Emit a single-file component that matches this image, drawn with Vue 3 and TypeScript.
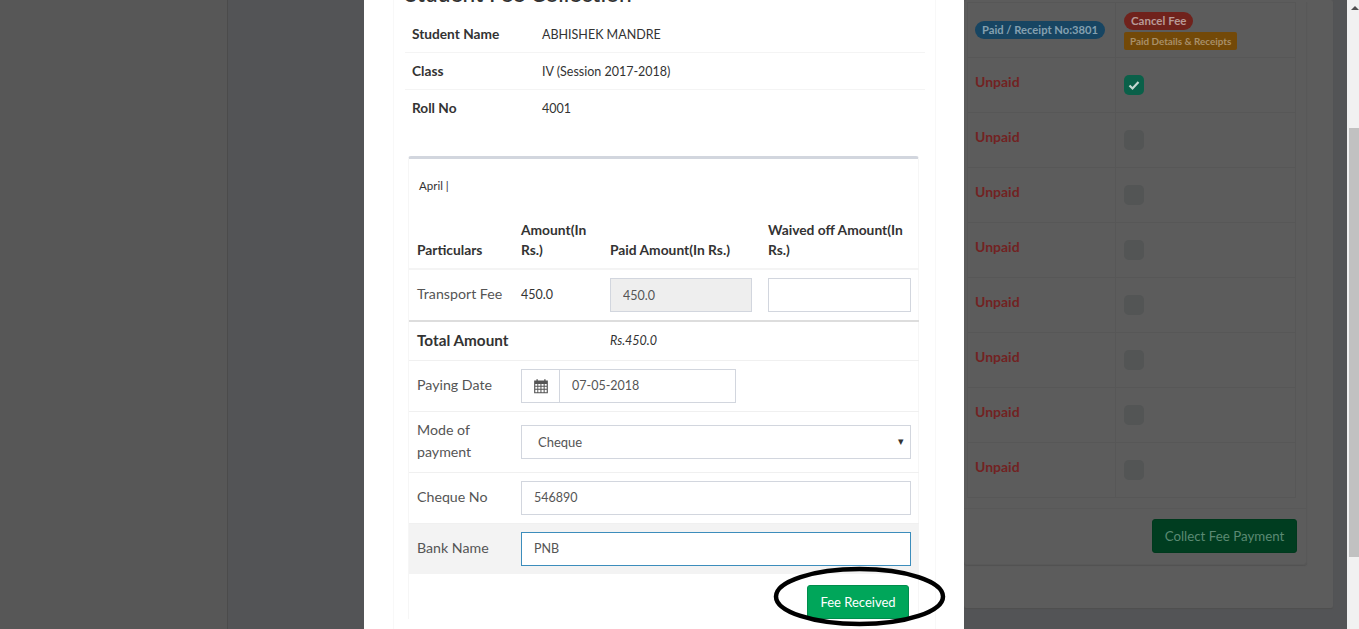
<script setup lang="ts">
const unpaid: boolean[] = [true, false, false, false, false, false, false, false]
</script>

<template>
  <div class="page">
    <aside class="sidebar"></aside>
    <main class="content">
      <div class="left-gap"></div>
      <div class="card">
        <div class="inner">
          <table class="fees">
            <tbody>
              <tr class="first">
                <td class="c1"><span class="badge blue">Paid / Receipt No:3801</span></td>
                <td>
                  <div class="stack">
                    <span class="badge red">Cancel Fee</span>
                    <span class="tag">Paid Details &amp; Receipts</span>
                  </div>
                </td>
              </tr>
              <tr v-for="(checked, i) in unpaid" :key="i">
                <td class="c1 unpaid">Unpaid</td>
                <td class="c2">
                  <span class="check" :class="{ on: checked }">
                    <svg v-if="checked" viewBox="0 0 20 20" width="20" height="20">
                      <path d="M5.5 10.5l3 3 6-6.5" fill="none" stroke="#c5d8d2" stroke-width="2.2" />
                    </svg>
                  </span>
                </td>
              </tr>
            </tbody>
          </table>
          <div class="inner-foot">
            <button class="collect">Collect Fee Payment</button>
          </div>
        </div>
      </div>
    </main>
    <div class="scrollbar">
      <span class="arrow"></span>
      <span class="thumb"></span>
    </div>

    <section class="modal">
      <div class="modal-frame">
        <h4 class="title">Student Fee Collection</h4>
        <table class="info">
          <tbody>
            <tr><th>Student Name</th><td>ABHISHEK MANDRE</td></tr>
            <tr><th>Class</th><td>IV (Session 2017-2018)</td></tr>
            <tr><th>Roll No</th><td>4001</td></tr>
          </tbody>
        </table>
        <div class="box">
          <p class="month">April |</p>
          <table class="pay">
            <colgroup>
              <col style="width:104px" />
              <col style="width:89px" />
              <col style="width:158px" />
              <col style="width:159px" />
            </colgroup>
            <thead>
              <tr>
                <th>Particulars</th>
                <th>Amount(In Rs.)</th>
                <th>Paid Amount(In Rs.)</th>
                <th>Waived off Amount(In Rs.)</th>
              </tr>
            </thead>
            <tbody>
              <tr class="fee-row">
                <td class="lbl">Transport Fee</td>
                <td class="amt">450.0</td>
                <td><input class="field disabled" value="450.0" readonly /></td>
                <td><input class="field" value="" /></td>
              </tr>
              <tr class="total">
                <td colspan="2" class="total-lbl">Total Amount</td>
                <td colspan="2" class="total-val">Rs.450.0</td>
              </tr>
              <tr class="date-row">
                <td class="lbl">Paying Date</td>
                <td colspan="3">
                  <div class="date-group">
                    <span class="addon">
                      <svg viewBox="0 0 14 14" width="16" height="16">
                        <path fill="#555" fill-rule="evenodd" d="M1 2.2h2V1h1.2v1.2h5.6V1H11v1.2h2V13.4H1zM2 5.2v1.6h1.8V5.2zm2.6 0v1.6h1.9V5.2zm2.8 0v1.6h1.9V5.2zm2.8 0v1.6H12V5.2zM2 7.6v1.9h1.8V7.6zm2.6 0v1.9h1.9V7.6zm2.8 0v1.9h1.9V7.6zm2.8 0v1.9H12V7.6zM2 10.3v2.1h1.8v-2.1zm2.6 0v2.1h1.9v-2.1zm2.8 0v2.1h1.9v-2.1zm2.8 0v2.1H12v-2.1z" />
                      </svg>
                    </span>
                    <input class="field date" value="07-05-2018" />
                  </div>
                </td>
              </tr>
              <tr class="mode-row">
                <td class="lbl">Mode of payment</td>
                <td colspan="3">
                  <div class="select-wrap">
                    <select class="field select">
                      <option>Cheque</option>
                    </select>
                    <span class="caret">▾</span>
                  </div>
                </td>
              </tr>
              <tr class="plain-row">
                <td class="lbl">Cheque No</td>
                <td colspan="3"><input class="field" value="546890" /></td>
              </tr>
              <tr class="plain-row hover">
                <td class="lbl">Bank Name</td>
                <td colspan="3"><input class="field focus" value="PNB" /></td>
              </tr>
            </tbody>
          </table>
          <div class="actions">
            <button class="received">Fee Received</button>
          </div>
        </div>
      </div>
      <svg class="circle" viewBox="0 0 180 70" width="180" height="70">
        <ellipse cx="89.5" cy="35.5" rx="83.5" ry="27.5" fill="none" stroke="#000" stroke-width="4.5" />
      </svg>
    </section>
  </div>
</template>

<style>
html, body { margin: 0; overflow: hidden; }
</style>

<style scoped>
* { box-sizing: border-box; }
.page {
  position: relative;
  display: flex;
  width: 1359px;
  height: 629px;
  overflow: hidden;
  font-family: "Lato", "Open Sans", sans-serif;
  font-size: 14px;
  color: #333;
}
.sidebar {
  width: 228px;
  flex: none;
  background: #575757;
  border-right: 1px solid #4b4b4b;
}
.content {
  flex: 1;
  display: flex;
  background: #535456;
  align-items: flex-start;
  padding-right: 14px;
}
.left-gap { width: 736px; flex: none; }
.card {
  width: 369px;
  height: 608px;
  background: #5c5c5c;
  border-radius: 2px;
  box-shadow: 0 1px 1px #4f4f4f;
  padding-right: 26px;
}
.inner {
  height: 563px;
  background: #5c5c5c;
  border: 1px solid #585858;
  border-top: none;
  border-left: none;
  border-radius: 0 0 3px 3px;
  box-shadow: 0 1px 1px #525252;
}
.fees {
  width: 329px;
  margin: 2px 0 0 3px;
  border-collapse: collapse;
  table-layout: fixed;
}
.fees td { border: 1px solid #575757; padding: 0; vertical-align: top; }
.fees tr { height: 55px; }
.fees .c1 { width: 148px; padding-left: 7px; }
.first td { vertical-align: middle !important; }
.first .c1 { padding-bottom: 2px; }
.c2 { padding: 17px 0 0 8px !important; }
.first td:last-child { padding-left: 8px; }
.stack { display: flex; flex-direction: column; align-items: flex-start; gap: 2px; padding-top: 2px; }
.badge {
  display: inline-block;
  height: 18px;
  line-height: 18px;
  padding: 0 7px;
  border-radius: 9px;
  font-size: 11.2px;
  font-weight: 700;
  color: #9c9c9c;
  white-space: nowrap;
}
.blue { background: #174562; color: #84a0b0; }
.red { background: #70221c; color: #b89a97; font-size: 11.5px; }
.tag {
  display: inline-block;
  height: 18px;
  line-height: 18px;
  padding: 0 6px;
  border-radius: 2px;
  background: #734908;
  color: #a88f68;
  font-size: 9.9px;
  font-weight: 700;
  white-space: nowrap;
}
.unpaid {
  padding-top: 15px !important;
  color: #722222;
  font-weight: 700;
  font-size: 14px;
}
.check {
  display: block;
  width: 20px;
  height: 20px;
  border-radius: 5px;
  background: #535555;
}
.check.on { background: #0a6049; }
.check svg { display: block; }
.inner-foot {
  margin-top: 10px;
  border-top: 1px solid #585858;
  padding: 10px 9px 0 0;
  display: flex;
  justify-content: flex-end;
}
.collect {
  width: 145px;
  height: 34px;
  border: 1px solid #00391d;
  border-radius: 3px;
  background: #003d20;
  color: #5b8a73;
  font: 13.3px "Lato", sans-serif;
}
.scrollbar {
  position: relative;
  width: 12px;
  flex: none;
  background: #f1f1f1;
}
.arrow {
  position: absolute;
  left: 4px;
  top: 6px;
  border: 4px solid transparent;
  border-top: none;
  border-bottom: 4px solid #505050;
}
.thumb {
  position: absolute;
  left: 2px;
  right: 0;
  top: 128px;
  height: 429px;
  background: #c1c1c1;
}

/* modal lies over the dimmed page */
.modal {
  position: absolute;
  left: 364px;
  top: 0;
  width: 600px;
  height: 629px;
  background: #fff;
  overflow: hidden;
}
.modal-frame {
  margin: -25px 28px 0 29px;
  border-left: 1px solid #f8f8f8;
  border-right: 1px solid #f8f8f8;
  min-height: 700px;
}
.title {
  margin: 0 0 0 11px;
  height: 40px;
  line-height: 38px;
  font-size: 22.7px;
  font-weight: 500;
  color: #333;
  white-space: nowrap;
}
.info {
  margin-left: 11px;
  width: 520px;
  border-collapse: collapse;
  table-layout: fixed;
}
.info th, .info td {
  height: 37px;
  padding: 0 0 0 7px;
  text-align: left;
  font-size: 12.5px;
  border-bottom: 1px solid #f4f4f4;
}
.info td { padding-top: 2px; }
.info th { width: 130px; font-weight: 700; font-size: 13.7px; color: #333; }
.info tr:last-child th, .info tr:last-child td { border-bottom: none; }
.box {
  margin: 30px 0 0 14px;
  width: 511px;
  border-top: 3px solid #d2d6de;
  border-radius: 3px 3px 0 0;
  border-left: 1px solid #f6f6f6;
  border-right: 1px solid #f6f6f6;
}
.month {
  margin: 0;
  padding: 20px 0 0 10px;
  height: 52px;
  font-size: 11.5px;
  line-height: 14px;
  color: #333;
}
.pay {
  width: 510px;
  border-collapse: collapse;
  table-layout: fixed;
}
.pay th {
  padding: 9px 8px 8px;
  text-align: left;
  vertical-align: bottom;
  font-size: 13.8px;
  line-height: 20px;
  font-weight: 700;
  border-bottom: 2px solid #f4f4f4;
}
.pay td { padding: 0 8px; vertical-align: middle; }
.pay td.lbl, .pay td.amt, .pay td.total-lbl { padding-bottom: 2px; }
.lbl { color: #555; font-size: 14.2px; line-height: 22px; }
.amt { font-size: 12.5px; }
.fee-row { height: 52px; }
.total { height: 39px; border-top: 2px solid #ddd; border-bottom: 1px solid #f0f0f0; }
.total td { border-top: 1px solid #ddd; }
.total-lbl { font-size: 15.3px; font-weight: 700; color: #333; }
.total-val { font-size: 12.5px; font-style: italic; }
.date-row { height: 51px; border-bottom: 1px solid #f0f0f0; }
.mode-row { height: 61px; border-bottom: 1px solid #f0f0f0; }
.plain-row { height: 51px; border-bottom: 1px solid #f0f0f0; }
.plain-row.hover { background: #f3f3f3; border-bottom: none; }
.field {
  display: block;
  width: 100%;
  height: 34px;
  padding: 0 12px;
  border: 1px solid #d2d6de;
  border-radius: 0;
  background: #fff;
  color: #555;
  font: 12.5px "Lato", sans-serif;
  outline: none;
}
.disabled { background: #eee; }
.focus { border-color: #3c8dbc; }
.date-group { display: flex; width: 215px; }
.addon {
  display: flex;
  align-items: center;
  justify-content: center;
  width: 38px;
  height: 34px;
  flex: none;
  border: 1px solid #d2d6de;
  border-right: none;
}
.date { flex: 1; min-width: 0; }
.select-wrap { position: relative; }
.select { appearance: none; -webkit-appearance: none; padding-left: 16px; font-size: 13px; }
.caret {
  position: absolute;
  right: 7px;
  top: 8px;
  font-size: 11px;
  line-height: 16px;
  color: #333;
}
.actions {
  display: flex;
  justify-content: flex-end;
  padding: 11px 9px 0 0;
}
.received {
  width: 102px;
  height: 34px;
  border: 1px solid #008d4c;
  border-radius: 3px;
  background: #00a65a;
  color: #fff;
  font: 13px "Lato", sans-serif;
}
.circle {
  position: absolute;
  left: 406px;
  top: 561px;
  pointer-events: none;
}
</style>
